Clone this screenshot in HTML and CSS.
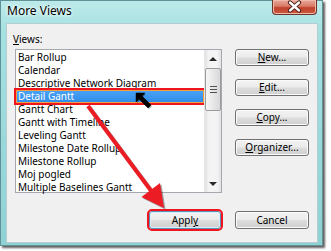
FILE: index.html
```html
<html>
<head>
    <title>More Views</title>
    <link rel="stylesheet" href="styles.css">
</head>

<body>
<div class="window">
    <div class="titlebar">
        <span class="title">More Views</span>
        <div class="close">
            <svg width="45" height="15" viewBox="0 0 45 15">
                <path d="M18 3.5 L27 11.5 M27 3.5 L18 11.5" stroke="#3b1410" stroke-width="4.2" stroke-linecap="round"/>
                <path d="M18 3.5 L27 11.5 M27 3.5 L18 11.5" stroke="#ffffff" stroke-width="2.4" stroke-linecap="round"/>
            </svg>
        </div>
    </div>

    <div class="panel">
        <div class="main">
            <div class="left">
                <div class="label"><u>V</u>iews:</div>
                <div class="listbox">
                    <ul class="items">
                        <li>Bar Rollup</li>
                        <li>Calendar</li>
                        <li>Descriptive Network Diagram</li>
                        <li class="selected">Detail Gantt</li>
                        <li>Gantt Chart</li>
                        <li>Gantt with Timeline</li>
                        <li>Leveling Gantt</li>
                        <li>Milestone Date Rollup</li>
                        <li>Milestone Rollup</li>
                        <li>Moj pogled</li>
                        <li>Multiple Baselines Gantt</li>
                    </ul>
                    <div class="scrollbar">
                        <div class="arrow"><span class="tri up"></span></div>
                        <div class="thumb"><span class="grip"></span></div>
                        <div class="track"></div>
                        <div class="arrow"><span class="tri down"></span></div>
                    </div>
                </div>
            </div>
            <div class="buttons">
                <div class="btn"><u>N</u>ew...</div>
                <div class="btn"><u>E</u>dit...</div>
                <div class="btn"><u>C</u>opy...</div>
                <div class="btn"><u>O</u>rganizer...</div>
            </div>
        </div>
        <div class="footer">
            <div class="btn default marked">Appl<u>y</u></div>
            <div class="btn">Cancel</div>
        </div>
    </div>
</div>

<svg class="annotation" width="331" height="251" viewBox="0 0 331 251">
    <!-- red arrow -->
    <g transform="translate(1.5 1.5)" opacity="0.35">
        <line x1="88" y1="106" x2="152" y2="192" stroke="#000" stroke-width="4"/>
        <polygon points="164,208 141.5,197 160,183" fill="#000"/>
    </g>
    <line x1="88" y1="106" x2="152" y2="192" stroke="#ec1c24" stroke-width="4"/>
    <polygon points="164,208 141.5,197 160,183" fill="#ec1c24"/>
    <!-- mouse pointer -->
    <g transform="translate(1 1)" opacity="0.35">
        <polygon points="136,93 145,93 142,96 151,105 148,108 139,99 136,102" fill="#000"/>
    </g>
    <polygon points="136,93 145,93 142,96 151,105 148,108 139,99 136,102" fill="#000" stroke="#000" stroke-width="0.5"/>
</svg>
</body>

</html>
```

FILE: styles.css
```css
body {
    margin: 0;
    background-color: white;
    font-family: "Noto Sans", "Open Sans", sans-serif;
    color: black;
}

u {
    text-decoration: underline;
    text-underline-offset: 1px;
}

.window {
    width: 321px;
    height: 244px;
    border: 1px solid #5f9196;
    background: linear-gradient(180deg, #bdeaea 0%, #a6e1e2 12%, #99d8da 60%, #8fd2d4 100%);
    box-shadow: 2px 2px 2px #000000a0;
    display: flex;
    flex-direction: column;
}

.titlebar {
    height: 22px;
    display: flex;
    justify-content: space-between;
    align-items: flex-start;
}

.title {
    font-size: 12px;
    line-height: 14px;
    padding: 3px 0 0 6px;
    text-shadow: 0 0 5px #ffffff, 0 0 3px #ffffff;
}

.close {
    width: 45px;
    height: 15px;
    margin: -1px 5px 0 0;
    border: 1px solid #6e3329;
    border-top: none;
    border-radius: 0 0 4px 4px;
    box-sizing: border-box;
    background: linear-gradient(180deg, #e9a99a 0%, #d77a66 45%, #c0412c 55%, #c95a3f 100%);
    box-shadow: inset 0 0 0 1px #f1b9a8;
}

.close svg {
    display: block;
    margin: -1px 0 0 -1px;
}

.panel {
    width: 310px;
    height: 218px;
    margin-left: 5px;
    border: 1px solid #b3cdd1;
    background-color: #f0f0f0;
    font-size: 10px;
}

.main {
    display: flex;
    gap: 13px;
    padding: 8px 8px 0 8px;
}

.left {
    display: flex;
    flex-direction: column;
}

.label {
    height: 14px;
    line-height: 14px;
    margin: 0 0 3px -2px;
}

.listbox {
    width: 205px;
    height: 142px;
    border: 1px solid #a5a8ae;
    background-color: white;
    display: flex;
}

.items {
    list-style: none;
    margin: 0;
    padding: 1px 0 0 0;
    flex: 1;
}

.items li {
    height: 13px;
    line-height: 13px;
    padding-left: 2px;
    white-space: nowrap;
    overflow: hidden;
}

.items li.selected {
    background: linear-gradient(180deg, #4aa3f5, #2f8be8);
    color: white;
    outline: 2px solid #f0141c;
    box-shadow: inset 0 0 0 1px #f0a040;
}

.scrollbar {
    width: 16px;
    display: flex;
    flex-direction: column;
    background: linear-gradient(90deg, #e2e2e2, #f4f4f4 25%, #f4f4f4 75%, #e2e2e2);
    border-left: 1px solid #e6e6e6;
}

.arrow {
    height: 17px;
    display: flex;
    align-items: center;
    justify-content: center;
}

.tri {
    width: 0;
    height: 0;
    border-left: 4px solid transparent;
    border-right: 4px solid transparent;
}

.tri.up {
    border-bottom: 4px solid #2a2a2a;
}

.tri.down {
    border-top: 4px solid #2a2a2a;
}

.thumb {
    height: 41px;
    margin: 1px 0 0 0;
    border: 1px solid #9b9b9b;
    border-radius: 2px;
    background: linear-gradient(90deg, #f6f6f6, #e8e8e8 50%, #d8d8d8);
    display: flex;
    align-items: center;
    justify-content: center;
}

.grip {
    width: 7px;
    height: 5px;
    border-top: 1px solid #505050;
    border-bottom: 1px solid #505050;
    background: linear-gradient(180deg, transparent 2px, #505050 2px, #505050 3px, transparent 3px);
}

.track {
    flex: 1;
}

.buttons {
    display: flex;
    flex-direction: column;
    gap: 13px;
    padding-top: 17px;
}

.btn {
    width: 72px;
    height: 15px;
    line-height: 15px;
    text-align: center;
    border: 1px solid #707070;
    border-radius: 3px;
    background: linear-gradient(180deg, #f3f3f3 0%, #ebebeb 48%, #dddddd 52%, #cfcfcf 100%);
    box-shadow: inset 0 0 0 1px #fbfbfb;
}

.footer {
    display: flex;
    justify-content: flex-end;
    gap: 12px;
    padding: 0 8px;
    margin-top: 18px;
}

.footer .btn {
    height: 16px;
    line-height: 16px;
}

.btn.default {
    width: 70px;
    margin-right: 2px;
    border-color: #5a8fb8;
    box-shadow: inset 0 0 0 1px #d6f0fb;
}

.btn.marked {
    outline: 2px solid #f0141c;
    outline-offset: 0;
}

.annotation {
    position: absolute;
    left: 0;
    top: 0;
    pointer-events: none;
}
```
